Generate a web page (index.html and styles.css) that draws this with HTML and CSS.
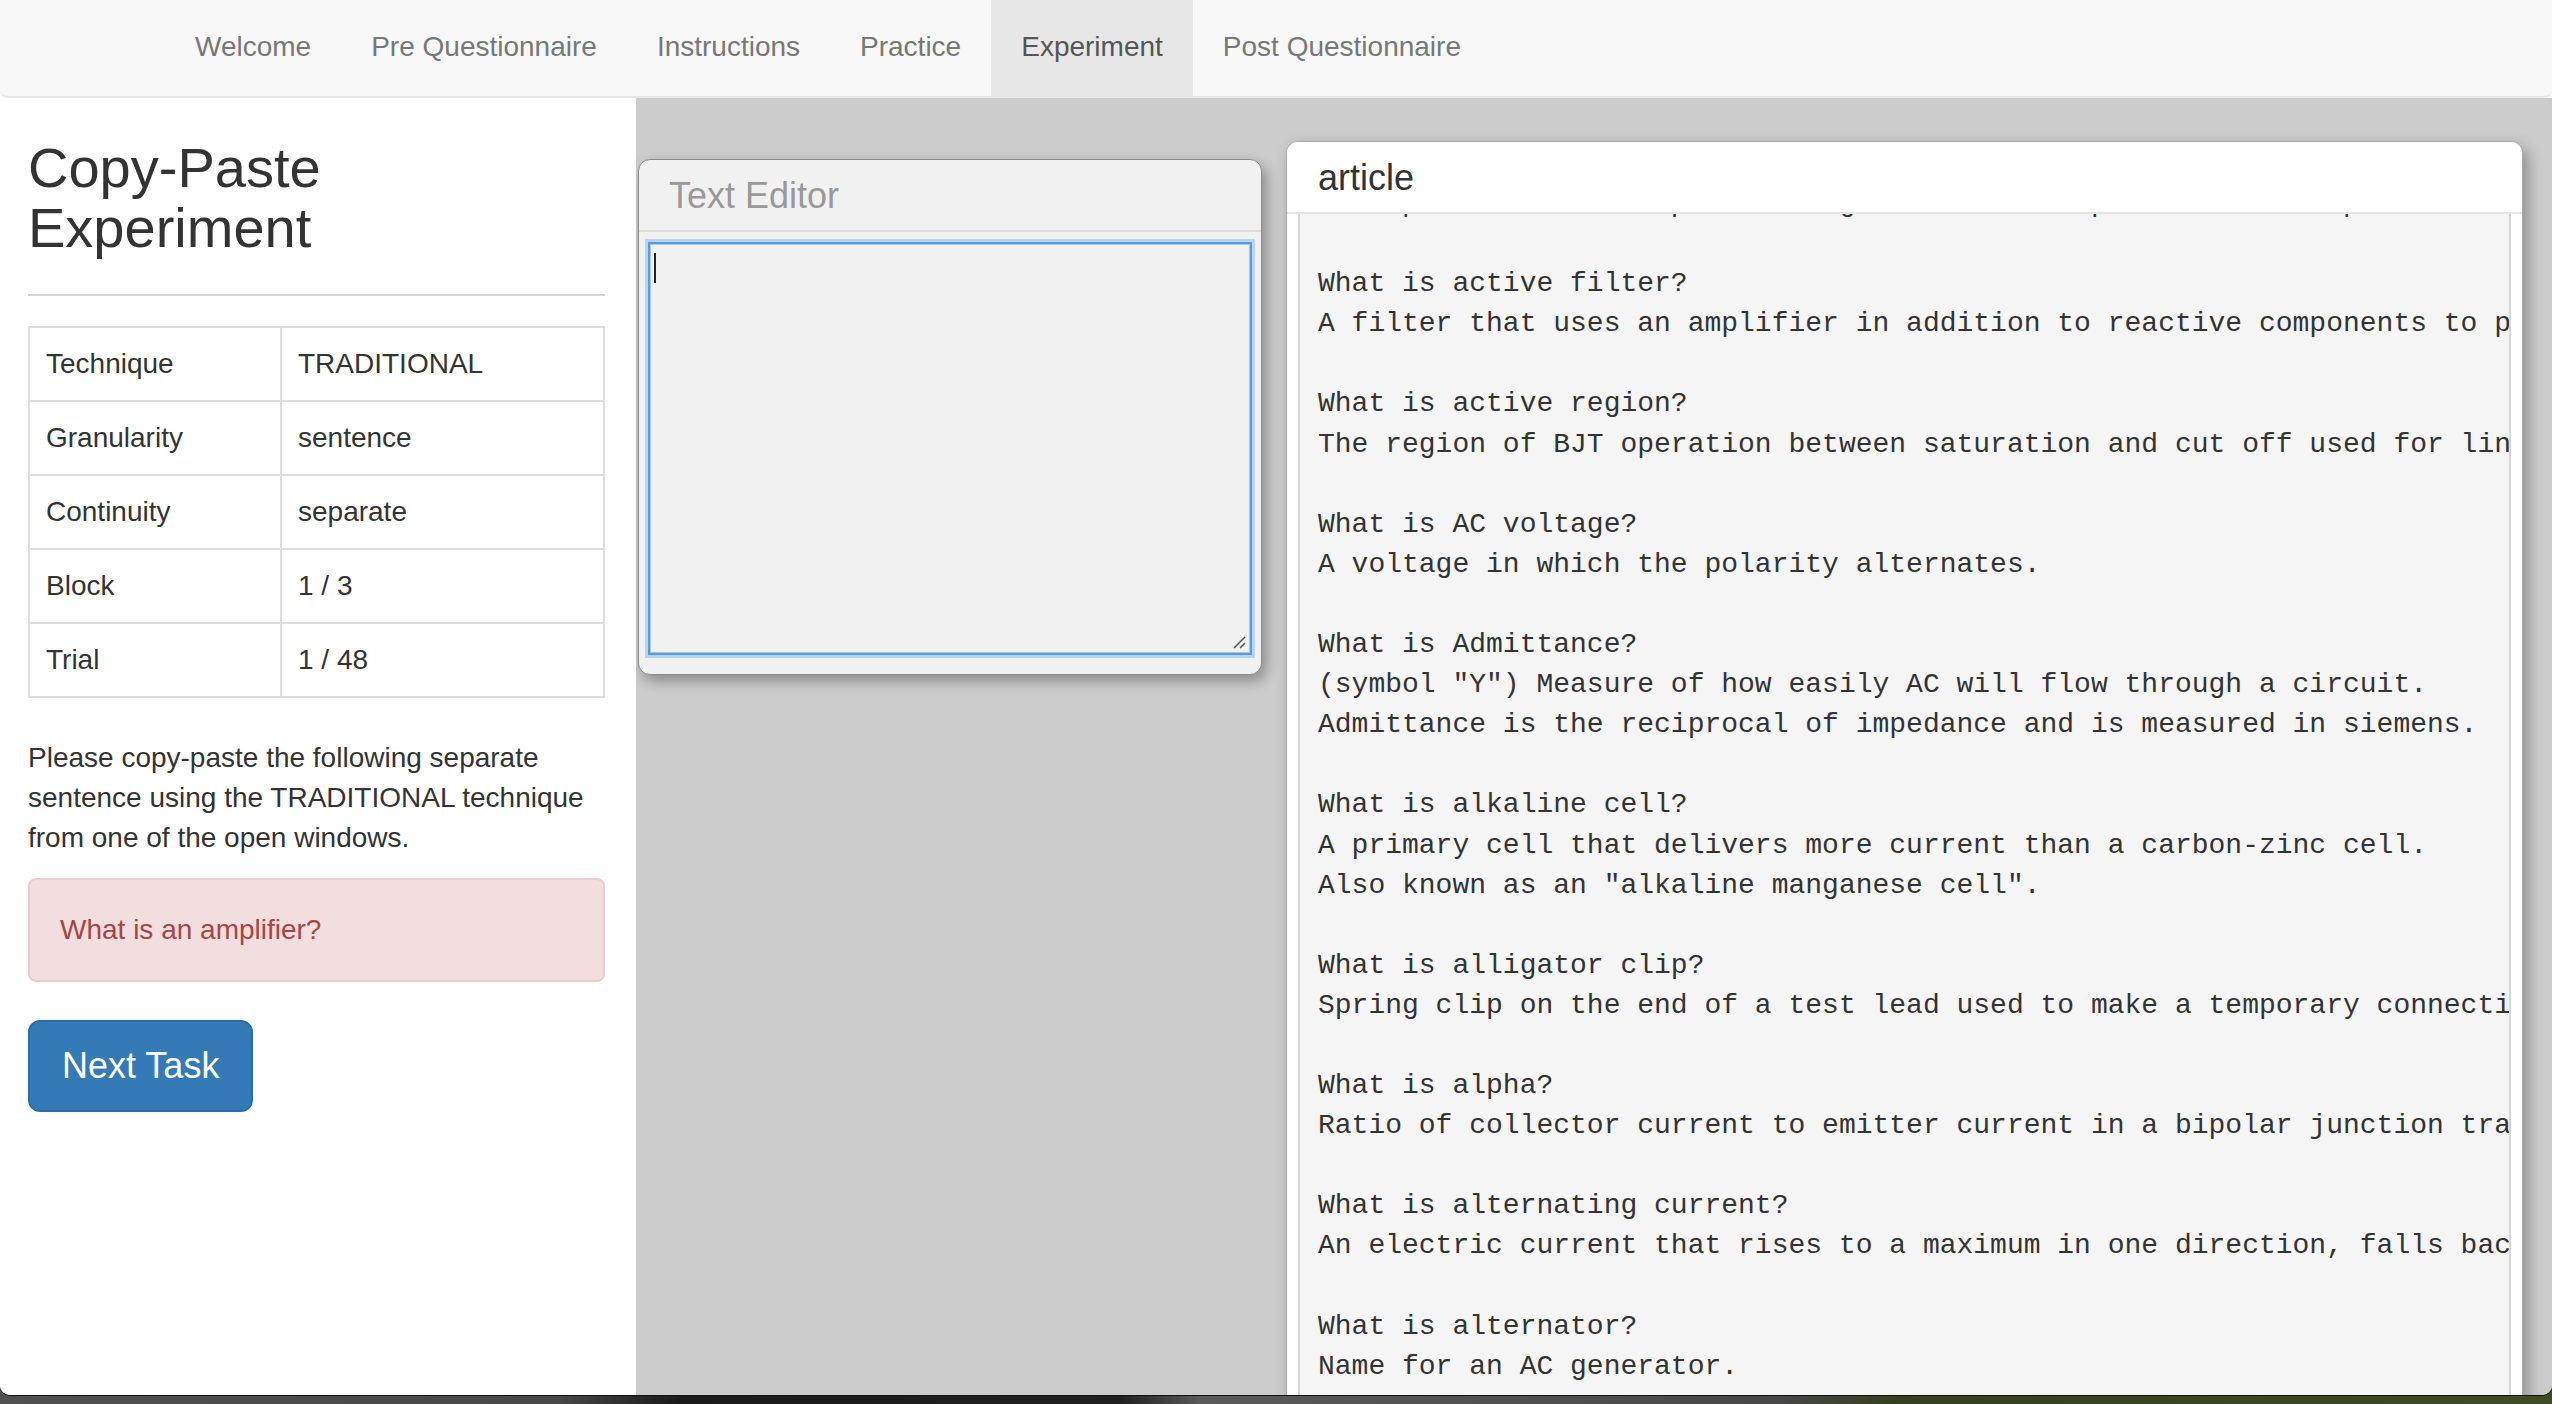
FILE: index.html
```html
<!DOCTYPE html>
<html lang="en">
<head>
<meta charset="utf-8">
<title>Copy-Paste Experiment</title>
<link rel="stylesheet" href="styles.css">
</head>
<body>
<div class="browser">
  <nav class="navbar">
    <ul class="nav">
      <li><a href="#">Welcome</a></li>
      <li><a href="#">Pre Questionnaire</a></li>
      <li><a href="#">Instructions</a></li>
      <li><a href="#">Practice</a></li>
      <li class="active"><a href="#">Experiment</a></li>
      <li><a href="#">Post Questionnaire</a></li>
    </ul>
  </nav>
  <div class="main">
    <aside class="sidebar">
      <h2 class="title">Copy-Paste Experiment</h2>
      <hr class="rule">
      <table class="info">
        <tr><td class="key">Technique</td><td>TRADITIONAL</td></tr>
        <tr><td class="key">Granularity</td><td>sentence</td></tr>
        <tr><td class="key">Continuity</td><td>separate</td></tr>
        <tr><td class="key">Block</td><td>1 / 3</td></tr>
        <tr><td class="key">Trial</td><td>1 / 48</td></tr>
      </table>
      <p class="lead">Please copy-paste the following separate sentence using the TRADITIONAL technique from one of the open windows.</p>
      <div class="alert">What is an amplifier?</div>
      <button class="btn" type="button">Next Task</button>
    </aside>
    <section class="workspace">
      <div class="window editor">
        <div class="win-head">Text Editor</div>
        <div class="win-body">
          <div class="textarea">
            <span class="caret"></span>
            <svg class="grip" width="16" height="16" viewBox="0 0 16 16">
              <line x1="3" y1="14" x2="14" y2="3" stroke="#555" stroke-width="1.6"/>
              <line x1="9" y1="14" x2="14" y2="9" stroke="#555" stroke-width="1.6"/>
            </svg>
          </div>
        </div>
      </div>
      <div class="window article">
        <div class="win-head">article</div>
        <div class="win-body">
<pre class="doc">A component that can produce a gain or switch power to an output.

What is active filter?
A filter that uses an amplifier in addition to reactive components to provide a desired frequency response.

What is active region?
The region of BJT operation between saturation and cut off used for linear amplification.

What is AC voltage?
A voltage in which the polarity alternates.

What is Admittance?
(symbol "Y") Measure of how easily AC will flow through a circuit.
Admittance is the reciprocal of impedance and is measured in siemens.

What is alkaline cell?
A primary cell that delivers more current than a carbon-zinc cell.
Also known as an "alkaline manganese cell".

What is alligator clip?
Spring clip on the end of a test lead used to make a temporary connection.

What is alpha?
Ratio of collector current to emitter current in a bipolar junction transistor.

What is alternating current?
An electric current that rises to a maximum in one direction, falls back to zero and then rises in the opposite direction.

What is alternator?
Name for an AC generator.

What is ammeter?
</pre>
        </div>
      </div>
    </section>
  </div>
</div>
</body>
</html>
```

FILE: styles.css
```css
html, body {
  margin: 0;
  padding: 0;
}

body {
  width: 2552px;
  height: 1404px;
  overflow: hidden;
  font-family: "Liberation Sans", Arial, sans-serif;
  color: #333;
  background: linear-gradient(90deg, #505050 0, #474747 560px, #1a1a1a 680px, #202020 1120px, #5a5a5a 1200px, #474747 1780px, #34401f 1900px, #3e4d25 2552px);
}

.browser {
  height: 1395px;
  background: #fff;
  border-radius: 0 0 10px 10px;
  overflow: hidden;
  display: flex;
  flex-direction: column;
  box-shadow: 0 1px 0 #111;
}

/* navbar */
.navbar {
  flex: none;
  height: 96px;
  background: #f8f8f8;
  border-bottom: 2px solid #e7e7e7;
  border-radius: 0 0 8px 8px;
  padding-left: 165px;
  display: flex;
  position: relative;
  z-index: 2;
}

.nav {
  list-style: none;
  margin: 0;
  padding: 0;
  display: flex;
}

.nav a {
  display: block;
  padding: 27px 30px 29px;
  line-height: 40px;
  font-size: 28px;
  color: #777;
  text-decoration: none;
}

.nav .active a {
  background: #e7e7e7;
  color: #555;
}

/* main area */
.main {
  flex: 1;
  display: flex;
  min-height: 0;
}

.sidebar {
  width: 636px;
  flex: none;
  box-sizing: border-box;
  padding: 0 31px 0 28px;
  background: #fff;
}

.title {
  font-size: 56px;
  line-height: 60px;
  font-weight: normal;
  margin: 40px 0 0;
  color: #333;
}

.rule {
  border: 0;
  border-top: 2px solid #d4d4d4;
  margin: 36px 0 30px;
}

.info {
  width: 100%;
  border-collapse: collapse;
  margin-bottom: 40px;
  font-size: 28px;
  line-height: 40px;
}

.info td {
  border: 2px solid #ddd;
  padding: 16px;
}

.info td.key {
  width: 218px;
}

.lead {
  margin: 0 0 20px;
  font-size: 28px;
  line-height: 40px;
}

.alert {
  padding: 30px;
  border: 2px solid #ebccd1;
  background: #f2dede;
  color: #a94442;
  border-radius: 8px;
  font-size: 28px;
  line-height: 40px;
  margin-bottom: 38px;
}

.btn {
  display: inline-block;
  font-family: inherit;
  font-size: 36px;
  line-height: 48px;
  padding: 20px 32px;
  border: 2px solid #2e6da4;
  background: #337ab7;
  color: #fff;
  border-radius: 12px;
  margin: 0;
}

/* desktop of windows */
.workspace {
  flex: 1;
  position: relative;
  background: #cccccc;
  overflow: hidden;
}

.window {
  position: absolute;
  box-sizing: border-box;
  border-radius: 12px;
  overflow: hidden;
}

.editor {
  left: 2px;
  top: 61px;
  width: 624px;
  height: 516px;
  background: #f1f1f1;
  border: 1px solid #8a8a8a;
  box-shadow: 4px 6px 14px rgba(0, 0, 0, 0.32);
}

.editor .win-head {
  padding: 16px 30px 14px;
  font-size: 36px;
  line-height: 40px;
  color: #999;
  border-bottom: 2px solid #dcdcdc;
}

.editor .win-body {
  padding: 10px 9px;
}

.textarea {
  position: relative;
  height: 413px;
  box-sizing: border-box;
  border: 2px solid #5b9bdb;
  box-shadow: 0 0 0 3px #b9d4f2, inset 0 0 0 1px #a9c8ee;
  background: #f1f1f1;
  padding: 9px 4px;
}

.caret {
  display: block;
  width: 2px;
  height: 30px;
  background: #222;
}

.grip {
  position: absolute;
  right: 3px;
  bottom: 3px;
}

.article {
  left: 650px;
  top: 43px;
  width: 1237px;
  height: 1320px;
  background: #fff;
  border: 1px solid #a8a8a8;
  box-shadow: 5px 6px 16px rgba(0, 0, 0, 0.3);
}

.article .win-head {
  padding: 16px 31px 14px;
  font-size: 36px;
  line-height: 40px;
  color: #333;
  border-bottom: 2px solid #e5e5e5;
  position: relative;
  z-index: 1;
  background: #fff;
}

.article .win-body {
  padding: 0 11px;
  height: 1240px;
  overflow: hidden;
}

.doc {
  margin: -50px 0 0;
  padding: 18px;
  border: 2px solid #d6d6d6;
  border-radius: 8px;
  background: #f5f5f5;
  font-family: "Liberation Mono", "Courier New", monospace;
  font-size: 28px;
  line-height: 40.1px;
  color: #333;
  white-space: pre;
  overflow: hidden;
}
```
